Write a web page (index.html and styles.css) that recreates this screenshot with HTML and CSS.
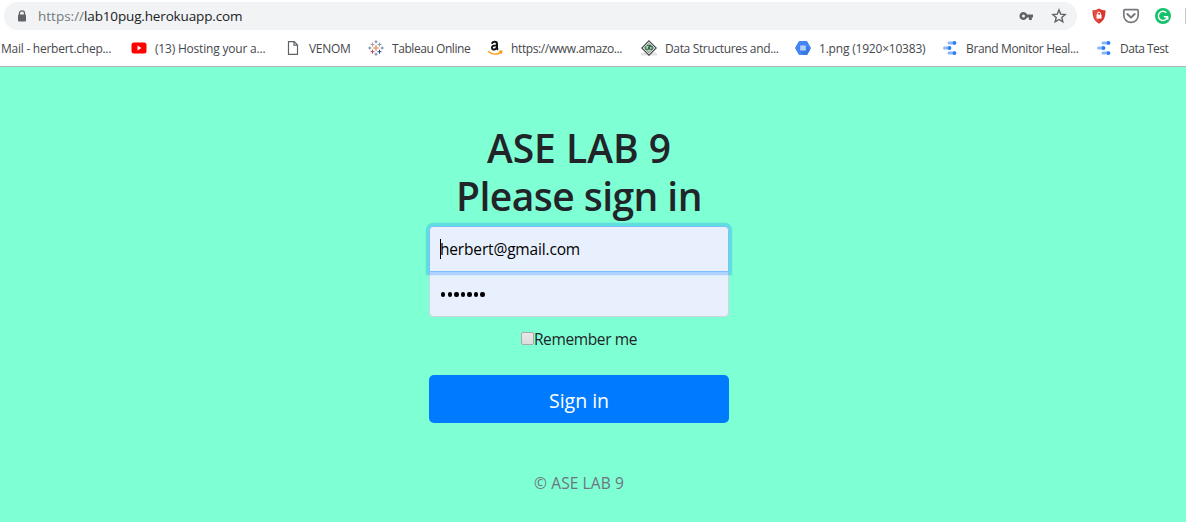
FILE: index.html
```html
<!DOCTYPE html>
<html lang="en">
<head>
<meta charset="utf-8">
<title>ASE LAB 9</title>
<link rel="stylesheet" href="styles.css">
</head>
<body>
<header class="browser">
  <div class="toolbar">
    <div class="omnibox">
      <svg class="lock" width="10" height="12" viewBox="0 0 10 12"><path d="M2.5 5V3a2.5 2.2 0 0 1 5 0v2" fill="none" stroke="#5f6368" stroke-width="1.3"/><rect x="1" y="4.4" width="8" height="7" rx="1" fill="#5f6368"/></svg>
      <div class="url"><span class="scheme">https://</span>lab10pug.herokuapp.com</div>
      <svg class="key" width="15" height="10" viewBox="0 0 15 10"><path fill="#5f6368" fill-rule="evenodd" d="M4.5 1a4 4 0 0 1 3.7 2.6H14v3h-1.2V9h-2.9V6.6H8.2A4 4 0 1 1 4.5 1zm0 2.6a1.5 1.5 0 1 0 0 3 1.5 1.5 0 0 0 0-3z"/></svg>
      <svg class="star" width="16" height="16" viewBox="0 0 16 16"><path fill="none" stroke="#5f6368" stroke-width="1.4" d="M8 1.9l1.7 4.2 4.5.4-3.4 2.9 1 4.4L8 11.5l-3.8 2.3 1-4.4-3.4-2.9 4.5-.4z"/></svg>
    </div>
    <svg class="ext shield" width="16" height="16" viewBox="0 0 16 16"><path fill="#d9362f" d="M8 .5c2 1.3 4 1.8 6.5 1.8C14.5 9 13 13 8 15.7 3 13 1.500 9 1.500 2.300 4 2.300 6 1.800 8 .5z"/><path fill="#ef6a5c" d="M8 1.500v13C4 12 2.600 9 2.500 3.200 4.500 3.100 6.300 2.600 8 1.500z" opacity=".5"/><path d="M6.500 7V5.700a1.500 1.500 0 0 1 3 0V7" fill="none" stroke="#fff"/><rect x="5.500" y="6.600" width="5" height="4" fill="#fff"/></svg>
    <svg class="ext pocket" width="18" height="16" viewBox="0 0 18 16"><path d="M3 1.700h12a1.200 1.200 0 0 1 1.200 1.200v4.300a7.200 7.200 0 0 1-14.400 0V2.900A1.200 1.200 0 0 1 3 1.700z" fill="#fff" stroke="#77787b" stroke-width="1.700"/><path d="M5.300 6L9 9.500 12.700 6" fill="none" stroke="#77787b" stroke-width="2" stroke-linecap="round" stroke-linejoin="round"/></svg>
    <svg class="ext grammar" width="16" height="16" viewBox="0 0 16 16"><circle cx="8" cy="8" r="8" fill="#15c26b"/><path d="M11.300 4.700A4.600 4.600 0 1 0 12.500 8.700H8.800M12.700 8.700v3" fill="none" stroke="#fff" stroke-width="1.400"/></svg>
    <span class="divider"></span>
  </div>
  <nav class="bookmarks">
    <a class="bookmark mail">Mail - herbert.chep...</a>
    <a class="bookmark"><svg width="16" height="16" viewBox="0 0 16 16"><rect x=".5" y="2.500" width="15" height="11" rx="2.500" fill="#f00"/><path d="M6.500 5.500v5L10.500 8z" fill="#fff"/></svg><span class="hosting">(13) Hosting your a...</span></a>
    <a class="bookmark"><svg width="16" height="16" viewBox="0 0 16 16"><path d="M3.500 1.600h5.700l3.300 3.300v9.500h-9zM9 1.600v3.500h3.500" fill="#fff" stroke="#5f6368" stroke-width="1.200"/></svg><span class="venom">VENOM</span></a>
    <a class="bookmark"><svg width="16" height="16" viewBox="0 0 16 16" fill="none"><path d="M8 5.200v5.600M5.200 8h5.600" stroke="#e8864a" stroke-width="1.200"/><path d="M4.500 2.500v4M2.500 4.500h4" stroke="#a98d98" stroke-width=".9"/><path d="M11.500 2.500v4M9.500 4.500h4" stroke="#6b9dac" stroke-width=".9"/><path d="M4.500 9.700v4M2.500 11.700h4" stroke="#b84d60"/><path d="M11.500 9.700v4M9.500 11.700h4" stroke="#354b85"/><path d="M8 .3v3M6.500 1.800h3M8 12.700v3M6.500 14.200h3M1.800 6.500v3M.3 8h3M14.200 6.500v3M12.700 8h3" stroke="#6a7896" stroke-width=".9"/></svg><span class="tableau">Tableau Online</span></a>
    <a class="bookmark"><svg width="16" height="16" viewBox="0 0 16 16" fill="none"><path d="M4.800 3.700C5.500 1.300 10 1.100 10 4v4q0 1 1 1.800" stroke="#111" stroke-width="2"/><path d="M9.700 5.300C6.500 5.200 4.800 6 4.900 7.800 5 10.300 9 10 9.700 7.200" stroke="#111" stroke-width="1.800"/><path d="M1 11.300c4 3.700 9.500 3.600 13 .8M12.300 11.200h2.500l-.8 2.500" stroke="#f90" stroke-width="1.400"/></svg><span class="amazon">https://www.amazo...</span></a>
    <a class="bookmark"><svg width="16" height="16" viewBox="0 0 16 16"><path d="M0 13.500l2-1h12l2 1v2H0z" fill="#e2e2e2"/><path d="M8 .8L15.200 8 8 15.200.8 8z" fill="#fff" stroke="#454b49" stroke-width="1.200"/><path d="M8 3.300L12.700 8 8 12.700 3.300 8z" fill="#c3d8ca" stroke="#59625e" stroke-width=".8"/><path d="M4.800 6.500v2.800h2.700V6.500M8.500 9.300V6.500h2.700v2.800zM6 5.500h4" fill="none" stroke="#2f6b48" stroke-width="1.100"/></svg><span class="data">Data Structures and...</span></a>
    <a class="bookmark"><svg width="16" height="16" viewBox="0 0 16 16"><path d="M4.500 1h7a1 1 0 0 1 .8.500l3.500 6a1 1 0 0 1 0 1l-3.500 6a1 1 0 0 1-.8.500h-7a1 1 0 0 1-.8-.500l-3.500-6a1 1 0 0 1 0-1l3.500-6a1 1 0 0 1 .8-.500z" fill="#4285f4"/><path d="M10.700 5.300L15 9.700 12 15H9L5.300 10.700z" fill="#3979e4"/><rect x="5.200" y="5.400" width="5.600" height="5.200" fill="#a9caff"/><path d="M5.200 7h5.600M5.200 9h5.600" stroke="#c4daff" stroke-width=".7"/></svg><span class="png">1.png (1920×10383)</span></a>
    <a class="bookmark"><svg width="16" height="16" viewBox="0 0 16 16"><path d="M7 2.900h5M2.500 8h5M7 13.100h5" stroke="#8bb8fb" stroke-width="3" stroke-linecap="round"/><g fill="#2b7df5"><circle cx="12.500" cy="2.900" r="1.900"/><circle cx="7.500" cy="8" r="1.900"/><circle cx="12.500" cy="13.100" r="1.900"/></g></svg><span class="brand">Brand Monitor Heal...</span></a>
    <a class="bookmark"><svg width="16" height="16" viewBox="0 0 16 16"><path d="M7 2.900h5M2.500 8h5M7 13.100h5" stroke="#8bb8fb" stroke-width="3" stroke-linecap="round"/><g fill="#2b7df5"><circle cx="12.500" cy="2.900" r="1.900"/><circle cx="7.500" cy="8" r="1.900"/><circle cx="12.500" cy="13.100" r="1.900"/></g></svg><span class="test">Data Test</span></a>
  </nav>
</header>
<main class="page">
  <form class="signin">
    <h1 class="title">ASE LAB 9</h1>
    <h1 class="title please">Please sign in</h1>
    <div class="field email"><span class="caret"></span><span class="email-text">herbert@gmail.com</span></div>
    <div class="field password"><i></i><i></i><i></i><i></i><i></i><i></i><i></i></div>
    <label class="remember"><span class="box"></span><span>Remember me</span></label>
    <button class="submit" type="button">Sign in</button>
    <p class="copyright">© ASE LAB 9</p>
  </form>
</main>
</body>
</html>
```
FILE: styles.css
```css
* { box-sizing: border-box; }
body {
  margin: 0;
  height: 522px;
  display: flex;
  flex-direction: column;
  overflow: hidden;
  background: #7fffd4;
  color: #212529;
  font-family: "Open Sans", "Noto Sans", sans-serif;
}
svg { display: block; flex: none; }

.browser { height: 67px; flex: none; background: #fff; border-bottom: 1px solid #b3b3b3; }
.toolbar { display: flex; align-items: center; height: 32px; }
.omnibox {
  display: flex;
  align-items: center;
  width: 1073px;
  height: 28px;
  margin-left: 4px;
  padding: 0 10px 0 13px;
  border-radius: 14px;
  background: #f1f3f4;
}
.url { flex: 1; margin-left: 11px; font-size: 13.5px; letter-spacing: -.15px; color: #202124; }
.scheme { color: #74787c; letter-spacing: 0; }
.key { margin-right: 17px; }
.shield { margin-left: 14px; }
.pocket { margin-left: 15px; }
.grammar { margin-left: 15px; }
.divider { width: 1px; height: 16px; margin-left: 14px; background: #c4c6c9; }

.bookmarks {
  display: grid;
  grid-template-columns: 130px 154px 83px 119px 154px 154px 147px 154px 90px;
  align-items: center;
  height: 32px;
  padding-left: 1px;
  white-space: nowrap;
  font-size: 12px;
  letter-spacing: -.3px;
  color: #45484c;
}
.bookmark { display: flex; align-items: center; gap: 8px; }
.mail { letter-spacing: -.25px; }
.hosting { letter-spacing: -.2px; }
.tableau { letter-spacing: -.44px; }
.amazon { letter-spacing: -.38px; }
.data, .brand { letter-spacing: -.35px; }
.png { letter-spacing: -.2px; }
.test { letter-spacing: -.5px; }

.page { display: flex; padding: 57px 0 0 429px; }
.signin { display: flex; flex-direction: column; width: 300px; text-align: center; }
.title { margin: 0; font-size: 39px; line-height: 48px; font-weight: 600; letter-spacing: 0; white-space: nowrap; }
.please { margin-bottom: 6px; letter-spacing: -.55px; }
.field {
  display: flex;
  align-items: center;
  height: 46px;
  padding: 0 10px;
  border: 1px solid #ced4da;
  background: #e8f0fe;
  color: #000;
  font-size: 15.5px;
}
.email {
  position: relative;
  border-color: #80bdff;
  border-radius: 4px 4px 0 0;
  box-shadow: 0 0 0 3.2px rgba(0, 123, 255, .25);
}
.email-text { letter-spacing: -.17px; }
.caret { width: 1px; height: 20px; margin-right: -1px; background: #000; }
.password { gap: 2.2px; margin-top: -1px; padding: 1px 0 0 11px; border-radius: 0 0 4px 4px; }
.password i { width: 4.4px; height: 4.4px; border-radius: 50%; background: #000; }
.remember {
  display: flex;
  align-items: center;
  justify-content: center;
  height: 24px;
  margin-top: 10px;
  font-size: 15.500px;
  letter-spacing: -.38px;
}
.box {
  width: 13px;
  height: 13px;
  margin-top: -2px;
  border: 1px solid #a9a9a9;
  border-radius: 2px;
  background: linear-gradient(#e8e8e8, #dcdcdc);
}
.submit {
  height: 48px;
  margin-top: 24px;
  padding: 2px 0 0;
  border: 0;
  border-radius: 5px;
  background: #007bff;
  color: #fff;
  font: 19.5px "Open Sans", sans-serif;
  letter-spacing: 0;
}
.copyright { margin: 48px 0 0; font-size: 15.500px; line-height: 24px; letter-spacing: .1px; color: #6c757d; }
```
